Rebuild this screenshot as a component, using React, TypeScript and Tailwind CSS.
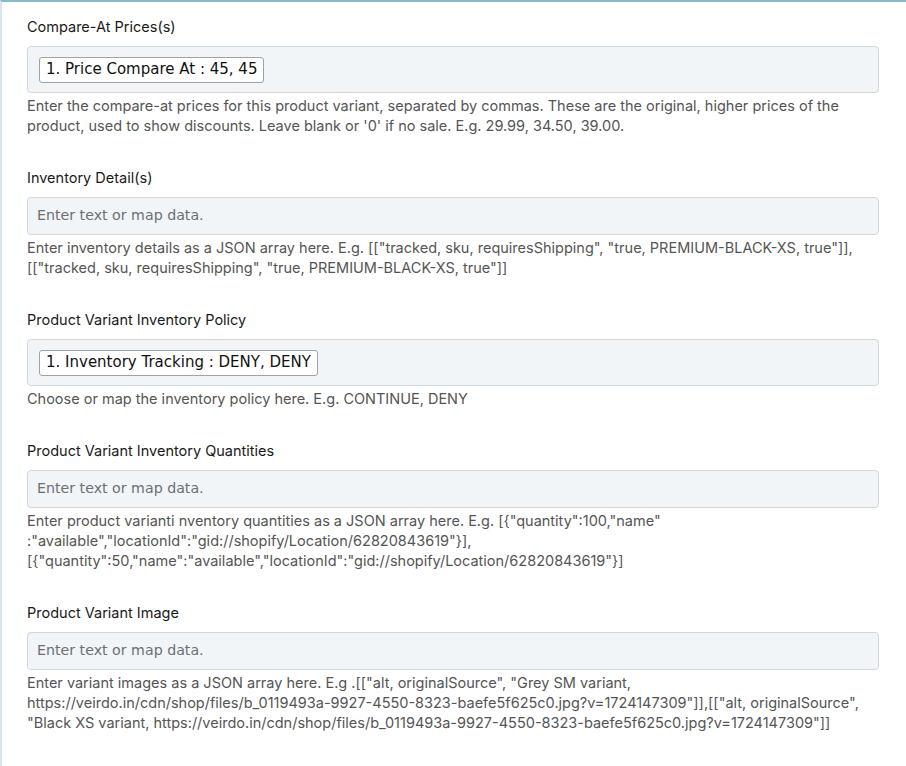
import React from "react";

type Field = {
  label: string;
  chip?: string;
  help: string;
};

const fields: Field[] = [
  {
    label: "Compare-At Prices(s)",
    chip: "1. Price Compare At : 45, 45",
    help: "Enter the compare-at prices for this product variant, separated by commas. These are the original, higher prices of the product, used to show discounts. Leave blank or '0' if no sale. E.g. 29.99, 34.50, 39.00.",
  },
  {
    label: "Inventory Detail(s)",
    help: 'Enter inventory details as a JSON array here. E.g. [["tracked, sku, requiresShipping", "true, PREMIUM-BLACK-XS, true"]], [["tracked, sku, requiresShipping", "true, PREMIUM-BLACK-XS, true"]]',
  },
  {
    label: "Product Variant Inventory Policy",
    chip: "1. Inventory Tracking : DENY, DENY",
    help: "Choose or map the inventory policy here. E.g. CONTINUE, DENY",
  },
  {
    label: "Product Variant Inventory Quantities",
    help: 'Enter product varianti nventory quantities as a JSON array here. E.g. [{"quantity":100,"name" :"available","locationId":"gid://shopify/Location/62820843619"}], [{"quantity":50,"name":"available","locationId":"gid://shopify/Location/62820843619"}]',
  },
  {
    label: "Product Variant Image",
    help: 'Enter variant images as a JSON array here. E.g .[["alt, originalSource", "Grey SM variant, https://veirdo.in/cdn/shop/files/b_0119493a-9927-4550-8323-baefe5f625c0.jpg?v=1724147309"]],[["alt, originalSource", "Black XS variant, https://veirdo.in/cdn/shop/files/b_0119493a-9927-4550-8323-baefe5f625c0.jpg?v=1724147309"]]',
  },
];

export default function App() {
  return (
    <div className="min-h-screen w-[906px] bg-white border-t-2 border-t-[#86bcc4] border-l-2 border-l-[#d9e4f2] font-['Inter',sans-serif]">
      <div className="pl-[25px] pr-[27px] pt-[15px]">
        {fields.map((f) => (
          <div key={f.label} className="mb-[32px]">
            <div className="text-[14.5px] leading-[20px] text-[#1a1a1a] mb-[9px]">{f.label}</div>
            {f.chip ? (
              <div className="h-[47px] rounded-[4px] border border-[#d2d7dc] bg-[#f1f5f8] px-[11px] flex items-center">
                <span className="h-[26px] px-[6px] flex items-center rounded-[3px] border border-[#9ca3a9] bg-white font-['DejaVu_Sans',sans-serif] text-[15px] text-[#111]">
                  {f.chip}
                </span>
              </div>
            ) : (
              <div className="h-[38px] rounded-[4px] border border-[#d2d7dc] bg-[#f1f5f8] px-[9px] flex items-center">
                <span className="font-['DejaVu_Sans',sans-serif] text-[14.2px] text-[#6b6f73]">
                  Enter text or map data.
                </span>
              </div>
            )}
            <p className="mt-[3px] text-[14.5px] leading-[20px] text-[#555] break-words">{f.help}</p>
          </div>
        ))}
      </div>
    </div>
  );
}
